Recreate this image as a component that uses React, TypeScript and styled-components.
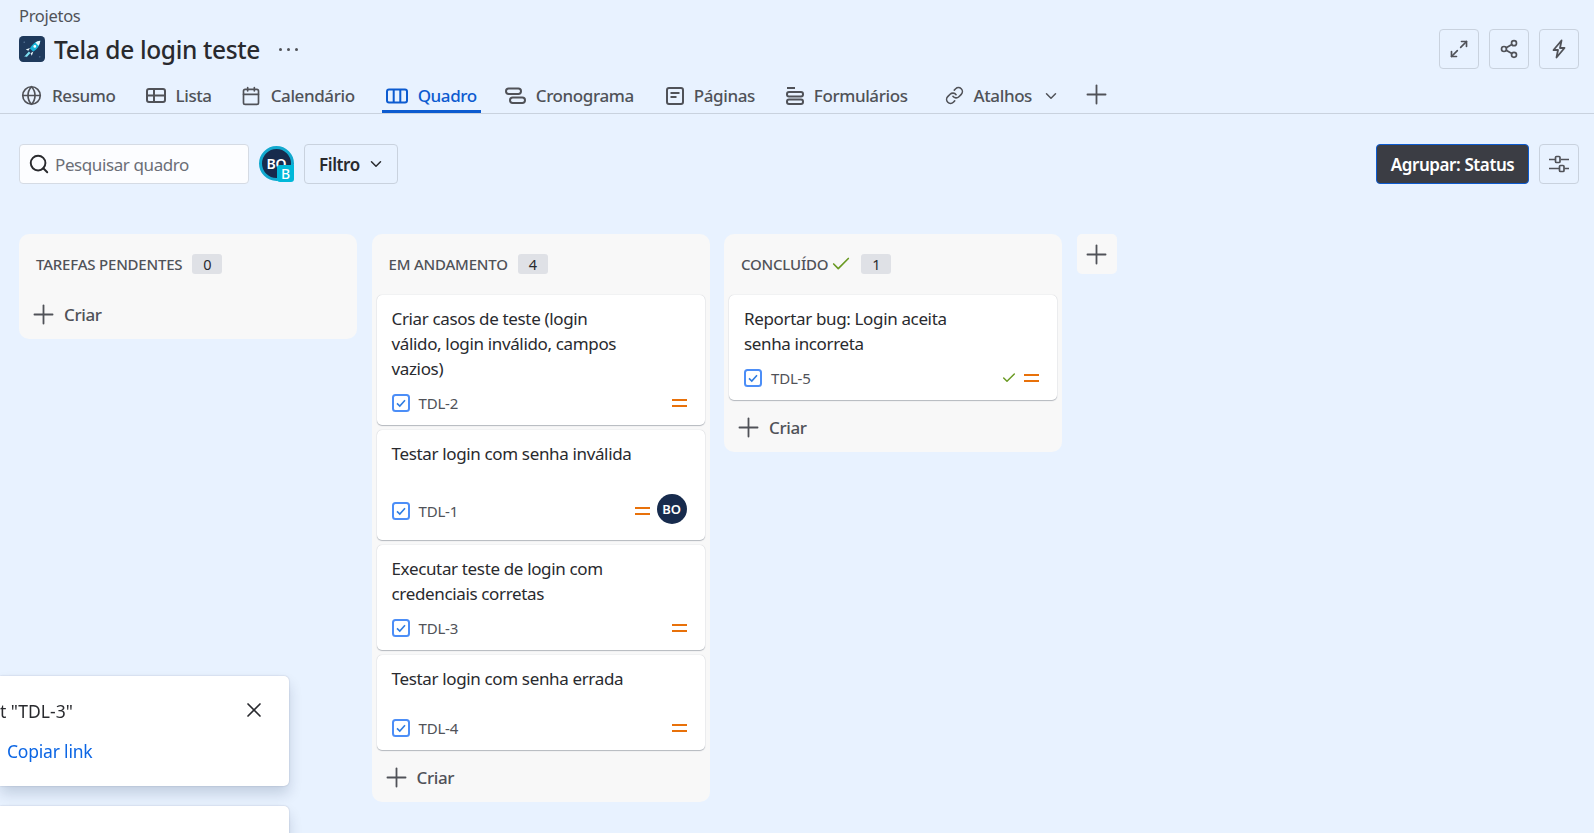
import { Calendar, Check, ChevronDown, Globe, Link, Maximize2, Plus, Search, Share2, X } from 'lucide-react';
import type { ReactNode } from 'react';
import styled, { createGlobalStyle } from 'styled-components';

const GlobalStyle = createGlobalStyle`
html, body {
  margin: 0;
  height: 100%;
  overflow: hidden;
  background: #e8f2ff;
}
body {
  font-family: "Noto Sans", "Open Sans", sans-serif;
  color: #292a2e;
}
* {
  box-sizing: border-box;
}
`

const Page = styled.div`
height: 833px;
overflow: hidden;
`

const Header = styled.header`
display: flex;
justify-content: space-between;
align-items: flex-start;
height: 67px;
padding: 5px 15px 0 19px;
`

const Crumb = styled.div`
font-size: 16.5px;
line-height: 21px;
letter-spacing: -0.3px;
color: #505258;
`

const TitleRow = styled.div`
display: flex;
align-items: center;
gap: 9px;
margin-top: 5px;
height: 36px;
`

const Title = styled.h1`
margin: 0;
font-size: 24.5px;
font-weight: 500;
letter-spacing: -0.35px;
color: #292a2e;
`

const MoreDots = styled.span`
display: flex;
gap: 5px;
margin-left: 10px;

i {
  width: 3px;
  height: 3px;
  border-radius: 50%;
  background: #505258;
}
`

const Actions = styled.div`
display: flex;
gap: 10px;
margin-top: 24px;
`

const IconButton = styled.button`
display: flex;
align-items: center;
justify-content: center;
width: 40px;
height: 40px;
padding: 0;
border: 1px solid #c9d2de;
border-radius: 4px;
background: transparent;
color: #505258;
`

const Tabs = styled.nav`
display: flex;
align-items: center;
height: 47px;
padding-left: 17px;
border-bottom: 1px solid #c9d2de;
`

const Tab = styled.div<{ $active?: boolean; $gap?: number }>`
display: flex;
align-items: center;
gap: 10px;
height: 46px;
margin-right: ${p => p.$gap ?? 22}px;
padding: 14px 4px 0;
font-size: 17px;
font-weight: 500;
letter-spacing: -0.4px;
color: ${p => (p.$active ? '#0c5bd0' : '#505258')};
border-bottom: 3px solid ${p => (p.$active ? '#0c5bd0' : 'transparent')};
`

const TabPlus = styled.span`
display: flex;
padding-top: 9px;
color: #505258;
`

const Toolbar = styled.div`
display: flex;
align-items: center;
height: 40px;
margin-top: 30px;
padding: 0 15px 0 19px;
`

const SearchBox = styled.div`
display: flex;
align-items: center;
gap: 5px;
width: 230px;
height: 40px;
padding: 0 8px;
border: 1px solid #d5dbe4;
border-radius: 4px;
background: #fcfdff;
font-size: 17px;
letter-spacing: -0.4px;
color: #6b6e76;
`

const AssigneeWrap = styled.div`
position: relative;
width: 35px;
height: 36px;
margin: 0 10px;
`

const AvatarRing = styled.div`
display: flex;
align-items: center;
justify-content: center;
width: 35px;
height: 35px;
border: 3px solid #12a9cf;
border-radius: 50%;
background: #172b4d;
color: #fff;
font-size: 14px;
font-weight: 600;
`

const AvatarBadge = styled.span`
position: absolute;
right: 0;
bottom: 0;
display: flex;
align-items: center;
justify-content: center;
width: 17px;
height: 17px;
border-radius: 3px 0 3px 3px;
background: #00b8d9;
color: #fff;
font-size: 14px;
font-weight: 500;
`

const FilterButton = styled.button`
display: flex;
align-items: center;
gap: 7px;
height: 40px;
padding: 0 12px 0 14px;
border: 1px solid #c9d2de;
border-radius: 4px;
background: transparent;
font-family: inherit;
font-size: 17px;
font-weight: 600;
letter-spacing: -0.4px;
color: #292a2e;
`

const ToolbarRight = styled.div`
display: flex;
gap: 10px;
margin-left: auto;
`

const GroupButton = styled.button`
width: 153px;
height: 40px;
padding: 0;
border: 1px solid #0c5bd0;
border-radius: 4px;
background: #3b3d44;
font-family: inherit;
font-size: 17px;
font-weight: 600;
letter-spacing: -0.4px;
color: #fff;
`

const Board = styled.main`
display: flex;
align-items: flex-start;
gap: 14.5px;
margin-top: 50px;
padding-left: 19px;
`

const Column = styled.section`
width: 338px;
padding: 0 5px;
border-radius: 10px;
background: #f8f8f8;
`

const ColumnHeader = styled.div`
display: flex;
align-items: center;
height: 53px;
padding: 6px 0 0 12px;
font-size: 15px;
font-weight: 500;
letter-spacing: -0.2px;
color: #505258;
`

const DoneMark = styled.span`
display: flex;
margin: 0 -1px 0 2px;
color: #6a9a23;
`

const Count = styled.span`
display: flex;
align-items: center;
justify-content: center;
width: 30px;
height: 20px;
margin-left: 10px;
border-radius: 3px;
background: #dfe1e6;
font-size: 14.5px;
font-weight: 400;
color: #292a2e;
`

const CardList = styled.div`
display: flex;
flex-direction: column;
gap: 5px;
margin-top: 8px;
`

const CardBox = styled.article`
padding: 11px 18px 10px 15px;
border-radius: 5px;
background: #fff;
box-shadow: 0 1px 1px #b4b8be, 0 0 1px #b9bec5;
`

const CardTitle = styled.p`
margin: 0 0 10px;
min-height: 40px;
max-width: 245px;
font-size: 17px;
line-height: 25px;
letter-spacing: -0.35px;
color: #292a2e;
`

const CardMeta = styled.div<{ $tall?: boolean }>`
display: flex;
align-items: center;
gap: 9px;
height: ${p => (p.$tall ? 39 : 24)}px;
font-size: 15px;
letter-spacing: -0.2px;
color: #505258;
`

const MetaRight = styled.div`
display: flex;
align-items: center;
gap: 7px;
margin-left: auto;
color: #6a9a23;
`

const SmallAvatar = styled.span`
display: flex;
align-items: center;
justify-content: center;
width: 30px;
height: 30px;
margin-bottom: 4px;
border-radius: 50%;
background: #172b4d;
color: #fff;
font-size: 13px;
font-weight: 600;
`

const CreateRow = styled.div`
display: flex;
align-items: center;
gap: 5px;
height: 52px;
padding: 2px 0 0 4px;
font-size: 17px;
font-weight: 500;
letter-spacing: -0.4px;
color: #505258;
`

const AddColumn = styled.button`
display: flex;
align-items: center;
justify-content: center;
width: 40px;
height: 40px;
padding: 0;
border: 0;
border-radius: 5px;
background: #f8f8f8;
color: #505258;
`

const Flags = styled.div`
position: fixed;
top: 676px;
left: 0;
display: flex;
flex-direction: column;
gap: 20px;
width: 289px;
`

const Flag = styled.div<{ $height: number }>`
position: relative;
height: ${p => p.$height}px;
padding: 23px 0 0;
border-radius: 0 5px 5px 0;
background: #fff;
box-shadow: 0 8px 14px rgba(9, 30, 66, 0.16), 0 0 2px rgba(9, 30, 66, 0.22);
`

const FlagText = styled.div`
font-size: 17.5px;
line-height: 24px;
color: #292a2e;
`

const FlagLink = styled.a`
display: block;
margin: 16px 0 0 7px;
font-size: 17.5px;
line-height: 24px;
letter-spacing: -0.2px;
color: #0c66e4;
`

const FlagClose = styled.span`
position: absolute;
top: 22px;
right: 23px;
display: flex;
color: #292a2e;
`

const stroke = {
  fill: 'none',
  stroke: 'currentColor',
  strokeWidth: 2,
} as const;

function ListIcon() {
  return (
    <svg width="20" height="20" viewBox="0 0 20 20" {...stroke}>
      <rect x="1" y="3" width="18" height="13" rx="2" />
      <path d="M1 9.5h18M8 3v13" />
    </svg>
  );
}

function BoardIcon() {
  return (
    <svg width="22" height="20" viewBox="0 0 22 20" {...stroke}>
      <rect x="1" y="3.5" width="20" height="13" rx="2" />
      <path d="M7.7 3.5v13M14.3 3.5v13" />
    </svg>
  );
}

function TimelineIcon() {
  return (
    <svg width="21" height="20" viewBox="0 0 21 20" {...stroke}>
      <rect x="1" y="2.5" width="15" height="5.5" rx="2.7" />
      <rect x="5" y="11.5" width="15" height="5.5" rx="2.7" />
    </svg>
  );
}

function PageIcon() {
  return (
    <svg width="18" height="20" viewBox="0 0 18 20" {...stroke}>
      <rect x="1" y="2" width="16" height="16" rx="2" />
      <path d="M4.5 7h9M4.5 11h6" />
    </svg>
  );
}

function FormIcon() {
  return (
    <svg width="18" height="20" viewBox="0 0 18 20" {...stroke}>
      <path d="M1 2h8" />
      <rect x="1" y="6" width="16" height="4.5" rx="2" />
      <rect x="1" y="13.5" width="16" height="4.5" rx="2" />
    </svg>
  );
}

function BoltIcon() {
  return (
    <svg width="20" height="20" viewBox="0 0 20 20" fill="none" stroke="currentColor" strokeWidth="1.8" strokeLinejoin="round">
      <path d="M12.5 1.5 4.5 11H9l-1.5 7.5 8-9.5H11z" />
    </svg>
  );
}

function SlidersIcon() {
  return (
    <svg width="22" height="22" viewBox="0 0 22 22" fill="none" stroke="currentColor" strokeWidth="1.7">
      <path d="M1 6.5h6M13 6.5h8M1 15.5h10M16.5 15.5H21" />
      <rect x="7.5" y="3.5" width="4.5" height="6" rx="1" />
      <rect x="11.5" y="12.5" width="4.5" height="6" rx="1" />
    </svg>
  );
}

function IssueCheck() {
  return (
    <svg width="18" height="18" viewBox="0 0 18 18" fill="none">
      <rect x="1" y="1" width="16" height="16" rx="2.5" stroke="#4c8ef7" strokeWidth="2" />
      <path d="M5 9.3l2.8 2.7L13 6.3" stroke="#2f7de1" strokeWidth="1.6" />
    </svg>
  );
}

function PriorityIcon() {
  return (
    <svg width="15" height="8" viewBox="0 0 15 8" fill="#e8710a">
      <rect width="15" height="2" />
      <rect y="6" width="15" height="2" />
    </svg>
  );
}

function RocketLogo() {
  return (
    <svg width="26" height="26" viewBox="0 0 25 25">
      <rect width="25" height="25" rx="4" fill="#1f3a5c" />
      <circle cx="5" cy="6" r="0.6" fill="#6f8db0" />
      <circle cx="20" cy="20" r="0.6" fill="#6f8db0" />
      <circle cx="18" cy="9" r="0.6" fill="#6f8db0" />
      <path d="M20.5 4.5c-4.5.5-8 3.5-10 7.5l3 3c4-2 6.5-6 7-10.500z" fill="#19b4d8" />
      <path d="M20.5 4.5c-1.8.2-3.4.8-4.8 1.700l3.100 3.100c.9-1.400 1.500-3 1.700-4.800z" fill="#e8f7fb" />
      <circle cx="15.2" cy="10" r="1.3" fill="#fff" />
      <path d="M10.5 11.5l-4 1.5 2.5 1.200zM13.800 15l-1.500 4-1.200-2.500z" fill="#e8f7fb" />
      <path d="M9.5 15l-4.500 5 2-.4.300.9 3.700-4.200z" fill="#7fe0f2" />
    </svg>
  );
}

interface TicketData {
  title: ReactNode;
  code: string;
  assigned?: boolean;
  done?: boolean;
}

function Ticket({ title, code, assigned, done }: TicketData) {
  return (
    <CardBox>
      <CardTitle>{title}</CardTitle>
      <CardMeta $tall={assigned}>
        <IssueCheck />
        {code}
        <MetaRight>
          {done && <Check size={16} strokeWidth={2.2} />}
          <PriorityIcon />
          {assigned && <SmallAvatar>BO</SmallAvatar>}
        </MetaRight>
      </CardMeta>
    </CardBox>
  );
}

function CreateButton() {
  return (
    <CreateRow>
      <Plus size={31} strokeWidth={1.4} />
      Criar
    </CreateRow>
  );
}

export default function App() {
  return (
    <Page>
      <GlobalStyle />
      <Header>
        <div>
          <Crumb>Projetos</Crumb>
          <TitleRow>
            <RocketLogo />
            <Title>Tela de login teste</Title>
            <MoreDots><i /><i /><i /></MoreDots>
          </TitleRow>
        </div>
        <Actions>
          <IconButton><Maximize2 size={20} strokeWidth={2} /></IconButton>
          <IconButton><Share2 size={20} strokeWidth={2} /></IconButton>
          <IconButton><BoltIcon /></IconButton>
        </Actions>
      </Header>

      <Tabs>
        <Tab><Globe size={21} strokeWidth={1.9} />Resumo</Tab>
        <Tab $gap={21}><ListIcon />Lista</Tab>
        <Tab $gap={23}><Calendar size={20} strokeWidth={2} />Calendário</Tab>
        <Tab $active $gap={20}><BoardIcon />Quadro</Tab>
        <Tab $gap={24}><TimelineIcon />Cronograma</Tab>
        <Tab $gap={23}><PageIcon />Páginas</Tab>
        <Tab $gap={29}><FormIcon />Formulários</Tab>
        <Tab $gap={17}><Link size={19} strokeWidth={2} />Atalhos<ChevronDown size={18} strokeWidth={2} /></Tab>
        <TabPlus><Plus size={31} strokeWidth={1.4} /></TabPlus>
      </Tabs>

      <Toolbar>
        <SearchBox>
          <Search size={22} strokeWidth={2.1} color="#292a2e" />
          Pesquisar quadro
        </SearchBox>
        <AssigneeWrap>
          <AvatarRing>BO</AvatarRing>
          <AvatarBadge>B</AvatarBadge>
        </AssigneeWrap>
        <FilterButton>
          Filtro
          <ChevronDown size={18} strokeWidth={2} />
        </FilterButton>
        <ToolbarRight>
          <GroupButton>Agrupar: Status</GroupButton>
          <IconButton><SlidersIcon /></IconButton>
        </ToolbarRight>
      </Toolbar>

      <Board>
        <Column>
          <ColumnHeader>TAREFAS PENDENTES<Count>0</Count></ColumnHeader>
          <CreateButton />
        </Column>

        <Column>
          <ColumnHeader>EM ANDAMENTO<Count>4</Count></ColumnHeader>
          <CardList>
            <Ticket title="Criar casos de teste (login válido, login inválido, campos vazios)" code="TDL-2" />
            <Ticket title="Testar login com senha inválida" code="TDL-1" assigned />
            <Ticket title="Executar teste de login com credenciais corretas" code="TDL-3" />
            <Ticket title="Testar login com senha errada" code="TDL-4" />
          </CardList>
          <CreateButton />
        </Column>

        <Column>
          <ColumnHeader>
            CONCLUÍDO
            <DoneMark><Check size={22} strokeWidth={1.8} /></DoneMark>
            <Count>1</Count>
          </ColumnHeader>
          <CardList>
            <Ticket title="Reportar bug: Login aceita senha incorreta" code="TDL-5" done />
          </CardList>
          <CreateButton />
        </Column>

        <AddColumn><Plus size={31} strokeWidth={1.4} /></AddColumn>
      </Board>

      <Flags>
        <Flag $height={110}>
          <FlagText>t "TDL-3"</FlagText>
          <FlagLink>Copiar link</FlagLink>
          <FlagClose><X size={24} strokeWidth={1.7} /></FlagClose>
        </Flag>
        <Flag $height={110} />
      </Flags>
    </Page>
  );
}
